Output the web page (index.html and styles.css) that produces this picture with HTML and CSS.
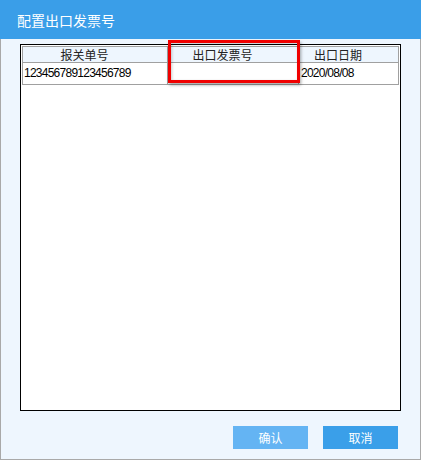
FILE: index.html
```html
<!DOCTYPE html>
<html lang="zh-CN">
<head>
    <meta charset="UTF-8">
    <meta name="viewport" content="width=device-width, initial-scale=1.0">
    <title>配置出口发票号</title>
    <link rel="stylesheet" href="styles.css">
</head>
<body>
    <div class="dialog">
        <div class="titlebar">配置出口发票号</div>

        <div class="content">
            <div class="grid">
                <div class="row head">
                    <div class="cell c1">报关单号</div>
                    <div class="cell c2">出口发票号</div>
                    <div class="cell c3">出口日期</div>
                </div>
                <div class="row data">
                    <div class="cell c1">123456789123456789</div>
                    <div class="cell c2"></div>
                    <div class="cell c3">2020/08/08</div>
                </div>
            </div>

            <div class="buttons">
                <button class="btn disabled">确认</button>
                <button class="btn">取消</button>
            </div>
        </div>

        <div class="highlight"></div>
    </div>
</body>
</html>
```

FILE: styles.css
```css
body {
    margin: 0;
    padding: 0;
    background-color: #ffffff;
    font-family: "Liberation Sans", "Noto Sans CJK SC", sans-serif;
    font-size: 12px;
    color: #000;
}
.dialog {
    position: relative;
    width: 419px;
    height: 459px;
    border: 1px solid #a9a9a9;
    border-top: none;
    background-color: #eef6fe;
}
.titlebar {
    height: 39px;
    line-height: 40px;
    margin: 0 -1px;
    padding-left: 17px;
    background-color: #3a9ee8;
    color: white;
    font-family: "Noto Sans CJK SC", sans-serif;
    font-size: 14px;
}
.content {
    padding: 5px 19px 0 19px;
}
.grid {
    height: 363px;
    border: 1px solid #000;
    padding: 1px;
    background-color: white;
}
.row {
    display: flex;
    width: 376px;
    border-left: 1px solid #a0a0a0;
    border-bottom: 1px solid #a0a0a0;
}
.row.head {
    border-top: 1px solid #a0a0a0;
    background-color: #eef6fe;
}
.cell {
    box-sizing: border-box;
    border-right: 1px solid #a0a0a0;
    white-space: nowrap;
    overflow: hidden;
}
.c1 { width: 145px; }
.c2 { width: 131px; }
.c3 { width: 100px; }
.head .cell {
    height: 15px;
    line-height: 15px;
    text-align: center;
    padding-right: 21px;
    font-family: "Noto Sans CJK SC", sans-serif;
    font-size: 12px;
    color: #222;
}
.data .cell {
    height: 21px;
    line-height: 21px;
    padding-left: 1px;
    letter-spacing: -0.75px;
}
.data .c3 {
    padding-left: 2px;
}
.buttons {
    display: flex;
    justify-content: flex-end;
    gap: 15px;
    margin-top: 15px;
    margin-right: 3px;
}
.btn {
    width: 75px;
    height: 23px;
    padding: 0;
    border: none;
    background-color: #3a9fe9;
    color: white;
    font-family: "Noto Sans CJK SC", sans-serif;
    font-size: 12px;
    cursor: pointer;
}
.btn.disabled {
    background-color: #64b4f3;
}
.highlight {
    position: absolute;
    left: 167px;
    top: 40px;
    width: 126px;
    height: 37px;
    border: 3px solid #f00000;
    box-shadow: 1px 2px 3px rgba(0, 0, 0, 0.35), inset 1px 1px 3px rgba(0, 0, 0, 0.2);
}
```
